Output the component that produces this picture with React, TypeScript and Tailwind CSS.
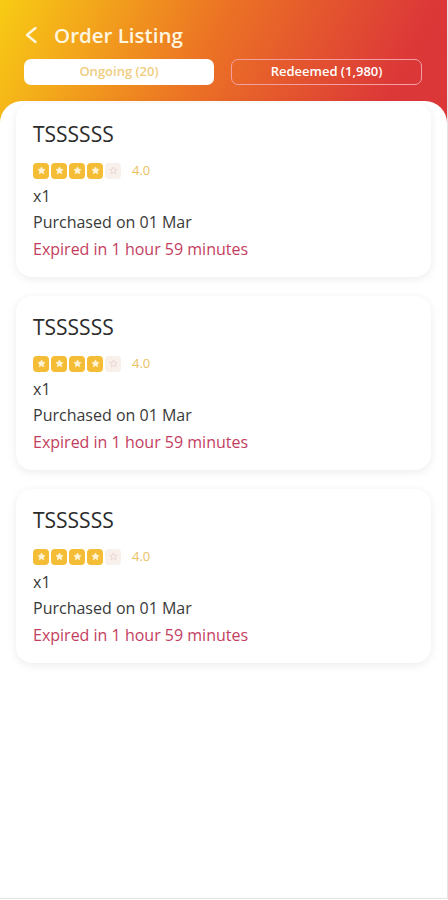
const orders = [
  { id: 1, name: "TSSSSSS", rating: 4, qty: 1, date: "01 Mar", expiry: "1 hour 59 minutes" },
  { id: 2, name: "TSSSSSS", rating: 4, qty: 1, date: "01 Mar", expiry: "1 hour 59 minutes" },
  { id: 3, name: "TSSSSSS", rating: 4, qty: 1, date: "01 Mar", expiry: "1 hour 59 minutes" },
]

function Star({ filled }: { filled: boolean }) {
  return (
    <span
      className={
        filled
          ? "flex h-[16px] w-[16px] items-center justify-center rounded-[4px] bg-[#f4bd35]"
          : "flex h-[16px] w-[16px] items-center justify-center rounded-[4px] bg-[#f8f0ea]"
      }
    >
      <svg viewBox="0 0 24 24" className="h-[9px] w-[9px]">
        <path
          d="M12 2.5l2.9 6.1 6.6.8-4.9 4.6 1.3 6.6L12 17.3l-5.9 3.3 1.3-6.6-4.9-4.6 6.6-.8z"
          fill={filled ? "#fff4d6" : "none"}
          stroke={filled ? "#fff4d6" : "#e8cfcf"}
          strokeWidth="2"
          strokeLinejoin="round"
        />
      </svg>
    </span>
  )
}

function OrderCard({ name, rating, qty, date, expiry }: (typeof orders)[number]) {
  return (
    <div className="h-[174px] rounded-[16px] bg-white px-[17px] pt-[16px] shadow-[0_2px_10px_rgba(0,0,0,0.08)]">
      <h2 className="text-[21px] leading-[30px] text-[#2b2b2b]">{name}</h2>
      <div className="mt-[12px] flex items-center">
        <div className="flex gap-[2px]">
          {[1, 2, 3, 4, 5].map((i) => (
            <Star key={i} filled={i <= rating} />
          ))}
        </div>
        <span className="ml-[11px] text-[13px] text-[#e9c163]">{rating.toFixed(1)}</span>
      </div>
      <p className="mt-[2px] text-[16px] leading-[26px] text-[#3a3a3a]">x{qty}</p>
      <p className="text-[16px] leading-[26px] text-[#3a3a3a]">Purchased on {date}</p>
      <p className="text-[16px] leading-[28px] text-[#c33e5e]">Expired in {expiry}</p>
    </div>
  )
}

export default function App() {
  return (
    <div className="flex h-[899px] w-[448px] flex-col border-r border-b border-[#e4e4e4] bg-[linear-gradient(115deg,#f8cc14_0%,#ec7424_26%,#dc3838_50%,#d62b3b_100%)] font-['Open_Sans',sans-serif]">
      {/* Header */}
      <div className="px-[24px] pt-[21px]">
        <div className="flex items-center">
          <svg viewBox="0 0 14 18" className="h-[18px] w-[14px]" fill="none">
            <path d="M11.5 2L3 9l8.5 7" stroke="#fff6e0" strokeWidth="2.4" strokeLinecap="round" strokeLinejoin="round" />
          </svg>
          <h1 className="ml-[16px] text-[20.5px] font-semibold leading-[28px] text-[#fff6e0]">Order Listing</h1>
        </div>
        <div className="mt-[10px] flex gap-[17px]">
          <button className="h-[26px] w-[190px] rounded-[7px] bg-white text-[13px] font-semibold text-[#f0cd80]">
            Ongoing (20)
          </button>
          <button className="h-[26px] w-[191px] rounded-[7px] border border-[#f3a0a4] text-[13px] font-semibold text-white">
            Redeemed (1,980)
          </button>
        </div>
      </div>

      {/* List */}
      <div className="mt-[16px] flex-1 rounded-t-[22px] bg-white px-[16px] pt-[2px]">
        <div className="flex flex-col gap-[19px]">
          {orders.map((o) => (
            <OrderCard key={o.id} {...o} />
          ))}
        </div>
      </div>
    </div>
  )
}
